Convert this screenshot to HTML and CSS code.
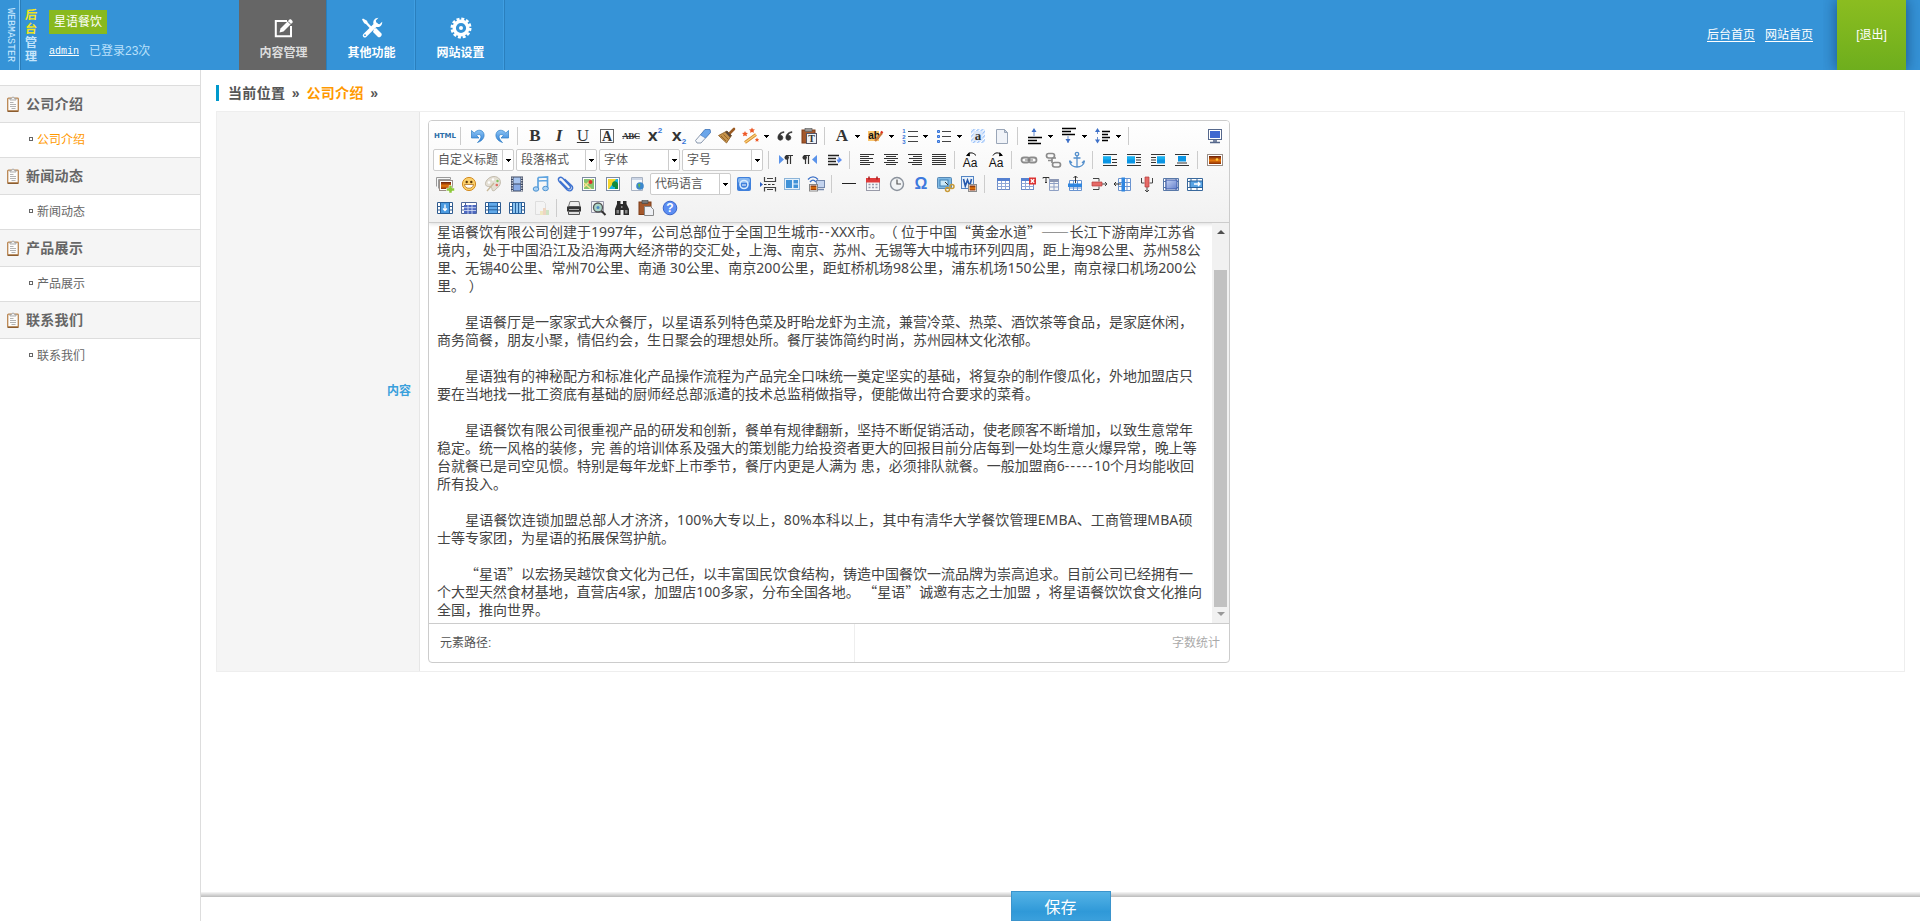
FILE: index.html
```html
<!DOCTYPE html>
<html lang="zh-CN">
<head>
<meta charset="utf-8">
<title>后台管理</title>
<link rel="stylesheet" href="styles.css">
</head>
<body>
<svg class="defs" width="0" height="0">
  <defs>
    <linearGradient id="g-blue" x1="0" y1="0" x2="0" y2="1"><stop offset="0" stop-color="#8cc4f5"/><stop offset="1" stop-color="#2f7fd6"/></linearGradient>
    <linearGradient id="g-sun" x1="0" y1="0" x2="0" y2="1"><stop offset="0" stop-color="#6a1d08"/><stop offset=".55" stop-color="#e8790c"/><stop offset="1" stop-color="#8a2d05"/></linearGradient>
    <linearGradient id="g-cell" x1="0" y1="0" x2="1" y2="1"><stop offset="0" stop-color="#c3d1f3"/><stop offset="1" stop-color="#6480cc"/></linearGradient>
    <pattern id="p-stripe" width="3" height="3" patternUnits="userSpaceOnUse" patternTransform="rotate(45)"><rect width="3" height="3" fill="#fff"/><rect width="1.4" height="3" fill="#9cc3fa"/></pattern>
  </defs>
  <symbol id="undo" viewBox="0 0 20 20"><path d="M3.500 4.500v7.500H11L8.600 9.600C10.500 7.600 13.500 8.500 12.800 11.500 12.400 13.500 11 15 9.500 16.500c5-1.500 7.500-5.500 6.300-9C14.500 3.500 9.500 3 6.200 7z" fill="url(#g-blue)" stroke="#2c7cc4" stroke-width=".7"/></symbol>
  <symbol id="redo" viewBox="0 0 20 20"><path d="M16.500 4.500v7.500H9l2.400-2.400C9.500 7.600 6.500 8.500 7.200 11.500 7.600 13.500 9 15 10.500 16.500c-5-1.500-7.500-5.500-6.300-9C5.500 3.500 10.500 3 13.800 7z" fill="url(#g-blue)" stroke="#2c7cc4" stroke-width=".7"/></symbol>
  <symbol id="eraser" viewBox="0 0 20 20"><path d="M2.500 14.500 12 3.500h5l.5 3-9.500 10.500H4z" fill="#f4f7fb" stroke="#8a98ad"/><path d="m7.500 9 4.500-5.500h5l.5 3-5 5.500z" fill="#6ba6ea" stroke="#3c76c0" stroke-width=".6"/></symbol>
  <symbol id="broom" viewBox="0 0 20 20"><path d="m17 3-4 4" stroke="#9a5a22" stroke-width="2.600" stroke-linecap="round"/><path d="m10 5 4.500 4.500L9.500 17 1.500 9.500z" fill="#c5924a" stroke="#8c5a20" stroke-width=".8"/><path d="m10 5 4.500 4.500-1.500 2L8 6z" fill="#5a4636"/><path d="m4 10 5 5M6.500 8.500l5 5" stroke="#805018" stroke-width=".7"/></symbol>
  <symbol id="wand" viewBox="0 0 20 20"><path d="m4 16.500 11-8" stroke="#d88a2c" stroke-width="3"/><path d="m4 16.500 11-8" stroke="#f9d27a" stroke-width="1.200"/><path d="m4 5 .9 1.800L7 7l-1.500 1.300.5 2L4 9.400l-2 .9.500-2L1 7l2.100-.2zM11 1.500l.9 1.800 2.100.2-1.500 1.300.5 2-2-.9-2 .9.500-2L8 3.500l2.100-.2zM16 11.500l.7 1.400 1.500.2-1.100 1 .3 1.600-1.400-.8-1.400.8.300-1.600-1.100-1 1.500-.2z" fill="#ee5a28"/></symbol>
  <symbol id="quote" viewBox="0 0 20 20"><path d="M9 6.500C6 7 5.500 8 5.500 9.200A2.500 2.500 0 1 1 3 12.500C2.500 9 5 6 9 5.700zM17 6.500c-3 .5-3.500 1.500-3.500 2.700a2.500 2.500 0 1 1-2.500 3.300C10.500 9 13 6 17 5.700z" fill="#333" stroke="#333" stroke-width=".7"/></symbol>
  <symbol id="page" viewBox="0 0 20 20"><path d="M4.500 3.500h8l3 3v11h-11z" fill="#f0f3f8" stroke="#9aa6b8"/><path d="M12.500 3.500v3h3z" fill="#c2cddd" stroke="#9aa6b8"/></symbol>
  <symbol id="ul" viewBox="0 0 20 20"><path d="M8 5.500h9M8 10.500h9M8 15.500h9" stroke="#444"/><path d="M3.500 4.500h2v2h-2zM3.500 9.500h2v2h-2zM3.500 14.500h2v2h-2z" fill="#8cb4f4" stroke="#3473d8"/></symbol>
  <symbol id="sptop" viewBox="0 0 20 20"><path d="M3 11.500h14M3 14.500h9M3 17.500h13" stroke="#000" stroke-width="1.300"/><path d="M9 3v7" stroke="#6b8fd0"/><path d="m6.500 6 2.500-4 2.500 4z" fill="#3d70c8"/></symbol>
  <symbol id="spbot" viewBox="0 0 20 20"><path d="M3 2.500h14M3 5.500h9M3 8.500h13" stroke="#000" stroke-width="1.300"/><path d="M9 10v7" stroke="#6b8fd0"/><path d="m6.500 13 2.500 4 2.500-4z" fill="#3d70c8"/></symbol>
  <symbol id="lineh" viewBox="0 0 20 20"><path d="M9 5.500h8M9 8.500h6M9 11.500h8M9 14.500h6" stroke="#000" stroke-width="1.300"/><path d="M4.500 4v4M4.500 11v5" stroke="#6b8fd0"/><path d="m2 6 2.500-4L7 6zM2 13.500l2.500 4 2.500-4z" fill="#3d70c8"/></symbol>
  <symbol id="screen" viewBox="0 0 20 20"><rect x="3.500" y="3.500" width="13" height="10" fill="#fff" stroke="#56688c"/><rect x="5" y="5" width="10" height="7" fill="#3f68d0"/><path d="M8 14h4v2H8z" fill="#7b88a4"/><path d="M5 16.500h10" stroke="#56688c" stroke-width="1.500"/></symbol>
  <symbol id="ltr" viewBox="0 0 20 20"><path d="M3 5v9l5-4.500z" fill="#5a93ea"/><path d="M11.500 5.500V14M14.500 5.500V14M10 5.500h7" stroke="#333" stroke-width="1.200"/><circle cx="10.700" cy="7.500" r="2.200" fill="#333"/></symbol>
  <symbol id="rtl" viewBox="0 0 20 20"><path d="M17 5v9l-5-4.500z" fill="#5a93ea"/><path d="M5.500 5.500V14M8.500 5.500V14M4 5.500h6" stroke="#333" stroke-width="1.200"/><circle cx="4.700" cy="7.500" r="2.200" fill="#333"/></symbol>
  <symbol id="indent" viewBox="0 0 20 20"><path d="M4 5.500h11M4 8.500h8M4 11.500h8M4 14.500h10" stroke="#222" stroke-width="1.500"/><path d="M12.500 9.500h2v-3l3.500 3.500-3.500 3z" fill="#5a8cf0"/></symbol>
  <symbol id="al" viewBox="0 0 20 20"><path d="M3 4.500h14M3 6.500h9M3 8.500h13M3 10.500h9M3 12.500h14M3 14.500h10" stroke="#333"/></symbol>
  <symbol id="ac" viewBox="0 0 20 20"><path d="M3 4.500h14M5 6.500h10M3 8.500h14M6 10.500h8M3 12.500h14M5 14.500h10" stroke="#333"/></symbol>
  <symbol id="ar" viewBox="0 0 20 20"><path d="M3 4.500h14M8 6.500h9M4 8.500h13M8 10.500h9M3 12.500h14M7 14.500h10" stroke="#333"/></symbol>
  <symbol id="aj" viewBox="0 0 20 20"><path d="M3 4.500h14M3 6.500h14M3 8.500h14M3 10.500h14M3 12.500h14M3 14.500h14" stroke="#333"/></symbol>
  <symbol id="link" viewBox="0 0 20 20"><g fill="none" stroke="#8b8b8b" stroke-width="1.800"><rect x="2.500" y="7.500" width="8" height="5" rx="2.500"/><rect x="9.500" y="7.500" width="8" height="5" rx="2.500"/></g><path d="M6 10h8" stroke="#777" stroke-width="1.200"/></symbol>
  <symbol id="unlink" viewBox="0 0 20 20"><g fill="none" stroke="#8b8b8b" stroke-width="1.700"><rect x="3.500" y="3.500" width="8" height="4.500" rx="2.200"/><rect x="9.500" y="12.500" width="8" height="4.500" rx="2.200"/><path d="M9 8v5M13 8H9.500M5 10.500h3.500"/></g></symbol>
  <symbol id="anchor" viewBox="0 0 20 20"><g fill="none" stroke="#5590cc" stroke-width="1.300"><circle cx="10" cy="4" r="1.700"/><path d="M10 6v11M6.500 8h7M2.500 11c.5 4 4 6 7.500 6s7-2 7.500-6M2.500 10.500 5 13M17.500 10.500 15 13"/></g></symbol>
  <symbol id="imgnone" viewBox="0 0 20 20"><path d="M3 4.500h14M3 15.500h14M12 9.500h5M12 12.500h5" stroke="#333"/><rect x="3" y="6.500" width="8" height="7" fill="#0b95e4"/><path d="M3 6.500h8v3H3z" fill="#17b0ef"/></symbol>
  <symbol id="imgleft" viewBox="0 0 20 20"><path d="M3 4.500h14M3 15.500h14M12 7.500h5M12 10h5M12 12.500h5" stroke="#333"/><rect x="3" y="6.500" width="8" height="7" fill="#0b95e4"/><path d="M3 6.500h8v3H3z" fill="#17b0ef"/></symbol>
  <symbol id="imgright" viewBox="0 0 20 20"><path d="M3 4.500h14M3 15.500h14M3 7.500h5M3 10h5M3 12.500h5" stroke="#333"/><rect x="9" y="6.500" width="8" height="7" fill="#0b95e4"/><path d="M9 6.500h8v3H9z" fill="#17b0ef"/></symbol>
  <symbol id="imgcenter" viewBox="0 0 20 20"><path d="M3 4.500h14M3 15.500h14M5 13h10" stroke="#333"/><rect x="6" y="6" width="8" height="5.500" fill="#0b95e4"/></symbol>
  <symbol id="image" viewBox="0 0 20 20"><rect x="2.500" y="4.500" width="15" height="11" fill="#fff" stroke="#9a8f88"/><rect x="4" y="6" width="12" height="8" fill="url(#g-sun)"/><circle cx="12" cy="9.500" r="1.300" fill="#ffc93a"/></symbol>
  <symbol id="images" viewBox="0 0 20 20"><path d="M1.500 12.500v-9h14v2M3.500 14.500v-9h12" fill="none" stroke="#9a9a9a"/><rect x="4.500" y="6.500" width="13" height="10" fill="#fff" stroke="#9a8f88"/><rect x="6" y="8" width="10" height="7" fill="url(#g-sun)"/><path d="M14 11.500h3v2.500h2.500v3H17v2h-3v-2h-2.500v-3H14z" fill="#8dc83a" stroke="#fff" stroke-width=".5"/></symbol>
  <symbol id="smile" viewBox="0 0 20 20"><circle cx="10" cy="10" r="6.600" fill="#fcd06a" stroke="#d28b22"/><circle cx="7.700" cy="8" r="1.200" fill="#5d3a08"/><circle cx="12.300" cy="8" r="1.200" fill="#5d3a08"/><path d="M5.500 10.500h9c-.5 5-8.500 5-9 0z" fill="#fff" stroke="#a86410" stroke-width=".7"/></symbol>
  <symbol id="palette" viewBox="0 0 20 20"><path d="M11 2.500c5 0 7.500 4 6 8-1 3-3 3-4 4.500-1 2-4 2.500-4 .5 0-2-1-3-3.500-3C2 12.500 1.500 9 4 6c1.500-2 4-3.500 7-3.500z" fill="#e4dfd4" stroke="#b8b0a0" stroke-width=".8"/><circle cx="6" cy="8.500" r="1.300" fill="#fff"/><circle cx="10" cy="5.500" r="1.200" fill="#fff"/><circle cx="14.500" cy="7" r="1.200" fill="#7ec458"/><circle cx="13.800" cy="11" r="1.300" fill="#e06a60"/><path d="m4 17 7-8" stroke="#c8b898" stroke-width="1.400"/></symbol>
  <symbol id="film" viewBox="0 0 20 20"><rect x="4" y="2.500" width="12" height="15" fill="#3b4660"/><rect x="6.500" y="3.500" width="7" height="6" fill="#a8c4ee"/><rect x="6.500" y="10.500" width="7" height="6" fill="#88aae4"/><path d="M5.200 3.500v14M14.800 3.500v14" stroke="#fff" stroke-width="1.200" stroke-dasharray="1.200 1.300"/></symbol>
  <symbol id="music" viewBox="0 0 20 20"><path d="M7 3.500 16.500 3v11.500M7 3.500V15M7 7l9.500-.5" fill="none" stroke="#5fa4e0" stroke-width="1.700"/><ellipse cx="5" cy="15" rx="2.800" ry="2.200" fill="#a8d2f5" stroke="#4d92d0"/><ellipse cx="14.500" cy="14.500" rx="2.800" ry="2.200" fill="#a8d2f5" stroke="#4d92d0"/></symbol>
  <symbol id="clip" viewBox="0 0 20 20"><path d="m5 7 7.500 7.500c2 1.500 4-.5 2.500-2.500L7.500 4C5 2 2 4.500 4.200 7.500l8 8.500c4 2.500 7-1.500 4.300-4.500L9.500 5" fill="none" stroke="#3f73d0" stroke-width="1.400"/></symbol>
  <symbol id="map" viewBox="0 0 20 20"><rect x="3.500" y="3.500" width="13" height="13" fill="#fff" stroke="#7c8aa0"/><rect x="5" y="5" width="10" height="10" fill="#86c46c"/><path d="m5 13 8-8M5 9l7 6" stroke="#f6e08a" stroke-width="1.500"/><circle cx="11.500" cy="8" r="2" fill="#d9302a"/></symbol>
  <symbol id="gmap" viewBox="0 0 20 20"><rect x="3.500" y="3.500" width="13" height="13" fill="#fff" stroke="#7c8aa0"/><rect x="5" y="5" width="10" height="10" fill="#18b4e0"/><path d="M5 5h8L6 15H5z" fill="#f6d62c"/><path d="M14 8c-3-2-5 0-5 2.500S12 14 14 12v-2h-2v5h3v-5z" fill="#108a3c"/></symbol>
  <symbol id="frame" viewBox="0 0 20 20"><path d="M4.500 3.500h11v13h-11z" fill="#f6f8fb" stroke="#a8b2c2"/><path d="M5 4h10v2H5z" fill="#ccd6e6"/><circle cx="13" cy="12" r="3.800" fill="#3b87cc"/><path d="M11 10c2-1 3 1 2 2s0 2-1 2z" fill="#64b84c"/></symbol>
  <symbol id="app" viewBox="0 0 20 20"><rect x="3" y="3" width="14" height="14" rx="2" fill="#3f80dc"/><rect x="4" y="4" width="12" height="5" rx="2" fill="#87b7f0"/><circle cx="10" cy="10.500" r="4" fill="none" stroke="#d9edff" stroke-width="1.600"/><path d="M8 11h4" stroke="#fff"/></symbol>
  <symbol id="pagebreak" viewBox="0 0 20 20"><path d="M6.500 3v4.500h11V3M6.500 17.500v-4h11v4M9 4.500h6M9 15.500h6" fill="none" stroke="#444" stroke-width="1.200"/><path d="M6 10.500h12" stroke="#333" stroke-dasharray="2.500 1.500"/><path d="m2 8 3 2.500L2 13z" fill="#2d60c4"/></symbol>
  <symbol id="template" viewBox="0 0 20 20"><rect x="2.500" y="4.500" width="15" height="11" fill="#e4f1fc" stroke="#8cb4d8"/><path d="M4 6h6v8H4zM11.500 6h4.500v3.500h-4.500zM11.500 10.500h4.500V14h-4.500z" fill="#3f92d8"/></symbol>
  <symbol id="remote" viewBox="0 0 20 20"><path d="M2 5.500C5 2 9 2 12 5.500M4 8c2-2.500 4-2.500 6 0" fill="none" stroke="#3e72c8" stroke-width="1.300"/><rect x="10.500" y="6.500" width="8" height="7" fill="#c4d4ee" stroke="#7488ac"/><path d="M12 15.500h6" stroke="#7488ac" stroke-width="1.500"/><rect x="3.500" y="10.500" width="8" height="6.500" fill="#fff" stroke="#888"/><rect x="4.500" y="11.500" width="6" height="4.500" fill="url(#g-sun)"/></symbol>
  <symbol id="hr" viewBox="0 0 20 20"><path d="M3 9.500h14" stroke="#222" stroke-width="1.200"/></symbol>
  <symbol id="cal" viewBox="0 0 20 20"><rect x="3.500" y="4.500" width="13" height="12" fill="#f6f6f8" stroke="#989aa8"/><path d="M3 4h14v4.500H3z" fill="#e03a3a"/><path d="M6 2.500v3M14 2.500v3" stroke="#a31f1f" stroke-width="1.500"/><path d="M5.500 10.500h9M5.500 13.500h9" stroke="#969cac" stroke-width="1.500" stroke-dasharray="2 1.500"/></symbol>
  <symbol id="clock" viewBox="0 0 20 20"><circle cx="10" cy="10" r="6.500" fill="#f2f4f6" stroke="#8b929c" stroke-width="1.400"/><path d="M10 5.500V10h4" fill="none" stroke="#555" stroke-width="1.200"/></symbol>
  <symbol id="snap" viewBox="0 0 20 20"><rect x="2.500" y="3.500" width="14" height="11" rx="1" fill="#7fb9e4" stroke="#5888b4"/><rect x="5" y="6" width="8" height="6" fill="#c9e8f8" stroke="#3f80b4"/><path d="m10 8 3 3" stroke="#333"/><circle cx="12.500" cy="15.500" r="2" fill="none" stroke="#c89a38" stroke-width="1.500"/><circle cx="17" cy="12.500" r="2" fill="none" stroke="#c89a38" stroke-width="1.500"/></symbol>
  <symbol id="word" viewBox="0 0 20 20"><rect x="2.500" y="2.500" width="12" height="12" fill="#e8f1fb" stroke="#5485c4"/><path d="m4.500 5 1.800 7L8.500 6l2.200 6 1.800-7" fill="none" stroke="#2458ac" stroke-width="1.600"/><rect x="9.500" y="10.500" width="8" height="7" fill="#fff" stroke="#8c8c8c"/><rect x="10.500" y="11.500" width="6" height="5" fill="url(#g-sun)"/></symbol>
  <symbol id="table" viewBox="0 0 20 20"><rect x="4.500" y="4.500" width="12" height="11" fill="#fff" stroke="#6c8cc8"/><path d="M4 4h13v3H4z" fill="#5580d0"/><path d="M4.500 9.500h12M4.500 12.500h12M8.500 7v8.500M12.500 7v8.500" stroke="#8fa8d8"/></symbol>
  <symbol id="deltable" viewBox="0 0 20 20"><rect x="4.500" y="4.500" width="12" height="11" fill="#fff" stroke="#6c8cc8"/><path d="M4 4h13v3H4z" fill="#5580d0"/><path d="M4.500 9.500h12M4.500 12.500h12M8.500 7v8.500M12.500 7v8.500" stroke="#8fa8d8"/><rect x="12" y="3.500" width="7" height="7" fill="#dc3030"/><path d="m13.800 5.300 3.400 3.400m0-3.400-3.400 3.400" stroke="#fff" stroke-width="1.400"/></symbol>
  <symbol id="ptable" viewBox="0 0 20 20"><path d="M2 4.500V3.500h6v1M5 3.500v5M4 8.500h2" fill="none" stroke="#333"/><path d="M8 5h10v3H8z" fill="#8d98b4"/><path d="M8.500 5.500v11h9v-11M8.500 9.500h9M8.500 13h9M13 8v8.500" fill="none" stroke="#8fa0c4"/></symbol>
  <symbol id="insrow" viewBox="0 0 20 20"><path d="M4.500 6.500h12v10h-12zM4.500 14h12M8.500 6.500v10M12.500 6.500v10" fill="#fff" stroke="#6a94d0"/><path d="M3 9.500h14v3.500H3z" fill="#2f86e0"/><path d="M10.500 2v7M8.500 4l2-2 2 2" fill="none" stroke="#333"/></symbol>
  <symbol id="delrow" viewBox="0 0 20 20"><path d="M4 4.500h6v3M4 15.500h6v-3M12 10h6m-2-2 2 2-2 2" fill="none" stroke="#444"/><path d="M3 8h10v4H3z" fill="#e56b68" stroke="#b83e3e" stroke-width=".7"/></symbol>
  <symbol id="inscol" viewBox="0 0 20 20"><path d="M5.500 4.500h12v12h-12zM5.500 8.500h12M5.500 12.500h12M14 4.500v12" fill="#fff" stroke="#6a94d0"/><path d="M8.500 3.500H12v14H8.500z" fill="#2f86e0"/><path d="M1 10h7M3 8l-2 2 2 2" fill="none" stroke="#333"/></symbol>
  <symbol id="delcol" viewBox="0 0 20 20"><path d="M4.500 4v5h3M15.500 4v5h-3M10 12v6m-2-2 2 2 2-2" fill="none" stroke="#444"/><path d="M8 3h4v10H8z" fill="#e56b68" stroke="#b83e3e" stroke-width=".7"/></symbol>
  <symbol id="merge" viewBox="0 0 20 20"><path d="M2.500 4.500h15v12h-15zM5 4v12M15 4v12M2.500 7.500h15M2.500 13.500h15" fill="#fff" stroke="#5878a8"/><rect x="5" y="6" width="11" height="9" fill="url(#g-cell)" stroke="#3c5aa8"/></symbol>
  <symbol id="mergeright" viewBox="0 0 20 20"><path d="M2.500 4.500h15v12h-15zM6 4v12M12 4v12M2.500 7.500h15M2.500 13.500h15" fill="#fff" stroke="#38689c"/><rect x="5" y="7" width="12.500" height="6.500" fill="#5aa4e4" stroke="#26609c"/><path d="M9 10h6m-2-2 2 2-2 2" fill="none" stroke="#fff" stroke-width="1.300"/></symbol>
  <symbol id="mergedown" viewBox="0 0 20 20"><path d="M2.500 4.500h15v11h-15zM2.500 8.500h15M2.500 12h15" fill="#fff" stroke="#305c90"/><rect x="5.500" y="4.500" width="9" height="11" fill="#4a9ae0" stroke="#26609c"/><path d="M10 6.500v6m-2-2 2 2 2-2" fill="none" stroke="#fff" stroke-width="1.300"/></symbol>
  <symbol id="splitcell" viewBox="0 0 20 20"><path d="M2.500 4.500h15v11h-15zM2.500 8.500h15M2.500 12h15M6.500 4.500v11" fill="#fff" stroke="#506898"/><rect x="5" y="7" width="12" height="8.500" fill="#4d68c0"/><path d="M5 9.700h12M5 12.500h12M9 7v9M13 7v9" stroke="#dbe3f8" stroke-width=".8"/></symbol>
  <symbol id="splitrow" viewBox="0 0 20 20"><path d="M2.500 4.500h15v11h-15zM2.500 8.500h15M2.500 12h15" fill="#fff" stroke="#305c90"/><path d="M5.500 4.500h9v11h-9z" fill="#62aaea" stroke="#26609c"/><path d="M5.500 8.300h9M5.500 11.800h9" stroke="#26609c"/></symbol>
  <symbol id="splitcol" viewBox="0 0 20 20"><path d="M2.500 4.500h15v11h-15zM2.500 8.500h15M2.500 12h15" fill="#fff" stroke="#305c90"/><path d="M5.500 4.500h9v11h-9z" fill="#8cc4f0" stroke="#26609c"/><path d="M8.500 4.500v11M11.500 4.500v11" stroke="#26609c"/></symbol>
  <symbol id="chart" viewBox="0 0 20 20" opacity=".35"><path d="M4.500 3.500h8l2 2v11h-10z" fill="#f6f6f6" stroke="#b8b8b8"/><path d="M9 13h3v4H9z" fill="#ecd66a"/><path d="M12 10h3v7h-3z" fill="#e6a06a"/><path d="M15 12h3v5h-3z" fill="#8cc870"/></symbol>
  <symbol id="print" viewBox="0 0 20 20"><path d="M6 3.500h9l1 5H4.500z" fill="#eee" stroke="#777"/><path d="M3 8.500h14v5H3z" fill="#333"/><path d="M5 11h10v1H5z" fill="#aaa"/><path d="M4.500 13.500h11v3h-11z" fill="#ddd" stroke="#555"/></symbol>
  <symbol id="preview" viewBox="0 0 20 20"><path d="M3.500 3.500h12v11h-12z" fill="#f2f4f6" stroke="#99a"/><circle cx="10" cy="9.500" r="4.500" fill="#aad4c8" stroke="#555" stroke-width="1.300"/><circle cx="10" cy="9.500" r="1.500" fill="#4c8ac4"/><path d="m13.500 13 4 4" stroke="#333" stroke-width="2"/></symbol>
  <symbol id="find" viewBox="0 0 20 20"><path d="M5 3h3.500v3H11V3h3.500v3L17 11v6h-5.500v-5h-3v5H3v-6l2-5z" fill="#2c2c2c"/><path d="M4.500 12h2.500v3.500H4.500zM13 12h2.500v3.500H13zM9 8h1.500v2H9z" fill="#888"/></symbol>
  <symbol id="paste" viewBox="0 0 20 20"><rect x="3" y="4" width="12" height="12.500" fill="#a4582c" stroke="#7c3c18"/><rect x="6" y="2.500" width="6" height="3" fill="#777" stroke="#444" stroke-width=".6"/><path d="M8.500 8.500h6l3 3v6h-9z" fill="#eef0f4" stroke="#888"/></symbol>
  <symbol id="clipboard" viewBox="0 0 12 16"><rect x=".7" y="2.200" width="10.600" height="12.800" rx=".8" fill="#fdfdfc" stroke="#b98550" stroke-width="1.300"/><path d="M.5 15.300h11" stroke="#7c4c1c"/><path d="M3 4V2.500h1.500C4.700.6 7.300.6 7.500 2.500H9V4z" fill="#f4f4f4" stroke="#999" stroke-width=".8"/><path d="M3 6.500h3.500M3 8.500h6M3 10.500h6M4.500 12.500h4" stroke="#aaa" stroke-width=".9"/></symbol>
</svg>

<header class="top">
  <div class="top-vert">WEBMASTER</div>
  <div class="top-name"><b>后</b><b>台</b><i>管</i><i>理</i></div>
  <div class="top-user">
    <span class="badge">星语餐饮</span>
    <div class="login"><a>admin</a><span>已登录23次</span></div>
  </div>
  <nav class="nav">
    <a class="on"><svg width="22" height="22" viewBox="0 0 22 22"><path d="M14 4H2.800v15.200H18V9" fill="none" stroke="#fff" stroke-width="2"/><path d="m6.500 15.500 1-4L16.500 2.500c1-1 4 1.500 3 3l-9 9z" fill="#fff"/><path d="m15 4.500 3 3" stroke="#666"/></svg>内容管理</a>
    <a><svg width="22" height="22" viewBox="0 0 22 22"><path d="m2 1.500 4 2.200.8 2 4.700 5-1.700 1.600-4.700-5-1.900-1L1 2.500z" fill="#fff"/><path d="m13 12 2-1 5.500 5.500c1 2-1.500 4.500-3.500 3.500L12 15z" fill="#fff"/><path d="M3.800 18.500 15 7.500" stroke="#fff" stroke-width="4" stroke-linecap="round"/><path d="M17.500.8c-3.500 0-6 3-5 6.200l3 3c3.500.7 6-2 5.700-5.200L18.500 7.300l-3-.8-.7-3z" fill="#fff"/><circle cx="4" cy="18.200" r=".9" fill="#3593d7"/></svg>其他功能</a>
    <a><svg width="22" height="22" viewBox="0 0 22 22"><circle cx="11" cy="11" r="9.200" fill="none" stroke="#fff" stroke-width="2.600" stroke-dasharray="3 1.817"/><circle cx="11" cy="11" r="6.800" fill="none" stroke="#fff" stroke-width="3.400"/><circle cx="11" cy="11" r="2" fill="#fff"/></svg>网站设置</a>
  </nav>
  <div class="top-links"><a>后台首页</a><a>网站首页</a></div>
  <a class="logout">[退出]</a>
</header>

<div class="body">
  <aside class="side">
    <h3><svg><use href="#clipboard"/></svg>公司介绍</h3><a class="cur">公司介绍</a>
    <h3><svg><use href="#clipboard"/></svg>新闻动态</h3><a>新闻动态</a>
    <h3><svg><use href="#clipboard"/></svg>产品展示</h3><a>产品展示</a>
    <h3><svg><use href="#clipboard"/></svg>联系我们</h3><a>联系我们</a>
  </aside>

  <main class="main">
    <div class="crumb"><span>当前位置</span><span class="raq">»</span><a>公司介绍</a><span class="raq">»</span></div>
    <div class="form">
      <div class="label">内容</div>
      <div class="field">
        <div class="editor">
          <div class="toolbar">
            <div class="row">
              <span class="b t-html">HTML</span><i class="sep"></i>
              <svg class="b"><use href="#undo"/></svg><svg class="b"><use href="#redo"/></svg><i class="sep"></i>
              <span class="b serif"><b>B</b></span><span class="b serif"><em>I</em></span><span class="b serif"><u>U</u></span>
              <svg class="b" viewBox="0 0 20 20"><rect x="3.500" y="3.500" width="13" height="13" fill="none" stroke="#666"/><text x="10" y="15" class="sg" font-size="14">A</text></svg><span class="b t-abc">ABC</span>
              <span class="b t-x">X<sup>2</sup></span><span class="b t-x">X<sub>2</sub></span>
              <svg class="b"><use href="#eraser"/></svg><svg class="b"><use href="#broom"/></svg>
              <svg class="b"><use href="#wand"/></svg><i class="dd"></i>
              <svg class="b"><use href="#quote"/></svg>
              <svg class="b" viewBox="0 0 20 20"><rect x="3" y="4" width="13" height="13" fill="#a4582c" stroke="#7c3c18"/><rect x="6" y="2.500" width="7" height="3" fill="#999" stroke="#555" stroke-width=".6"/><rect x="7.500" y="7.500" width="10" height="10" fill="#eef2f6" stroke="#556"/><text x="12.500" y="16" class="sg" font-size="10">T</text></svg><i class="sep"></i>
              <svg class="b" viewBox="0 0 20 20"><text x="10" y="15" class="sg" font-size="17">A</text></svg><i class="dd"></i>
              <svg class="b" viewBox="0 0 20 20"><rect x="2" y="5" width="11" height="10" fill="#f9c56c"/><text x="8" y="13" class="ss" font-size="10" font-weight="bold">ab</text><path d="m9 15 7-8" stroke="#c87838" stroke-width="2.400"/><path d="m15 7 1.500-1.500" stroke="#df3020" stroke-width="2.400"/></svg><i class="dd"></i>
              <svg class="b" viewBox="0 0 20 20"><path d="M8 5.500h10M8 10.500h10M8 15.500h10" stroke="#444"/><text x="4" y="7" class="ss num">1</text><text x="4" y="12.500" class="ss num">2</text><text x="4" y="18" class="ss num">3</text></svg><i class="dd"></i>
              <svg class="b"><use href="#ul"/></svg><i class="dd"></i>
              <svg class="b" viewBox="0 0 20 20"><rect x="3" y="3" width="14" height="14" fill="url(#p-stripe)"/><rect x="5.500" y="5" width="9" height="10" fill="#dbe8fb"/><text x="10" y="14" class="sg" font-size="13">a</text></svg><svg class="b"><use href="#page"/></svg><i class="sep"></i>
              <svg class="b"><use href="#sptop"/></svg><i class="dd"></i>
              <svg class="b"><use href="#spbot"/></svg><i class="dd"></i>
              <svg class="b"><use href="#lineh"/></svg><i class="dd"></i><i class="sep"></i>
              <svg class="b last"><use href="#screen"/></svg>
            </div>
            <div class="row">
              <span class="combo">自定义标题</span><span class="combo">段落格式</span><span class="combo">字体</span><span class="combo">字号</span><i class="sep"></i>
              <svg class="b"><use href="#ltr"/></svg><svg class="b"><use href="#rtl"/></svg><svg class="b"><use href="#indent"/></svg><i class="sep"></i>
              <svg class="b"><use href="#al"/></svg><svg class="b"><use href="#ac"/></svg><svg class="b"><use href="#ar"/></svg><svg class="b"><use href="#aj"/></svg><i class="sep"></i>
              <svg class="b" viewBox="0 0 20 20"><text x="8" y="16.500" class="ss" font-size="12">Aa</text><path d="M5 5.500C7 2 11 2 14 5.500" fill="none" stroke="#000"/><path d="M7.500 2 4 5.800l4 .5z"/></svg>
              <svg class="b" viewBox="0 0 20 20"><text x="10" y="16.500" class="ss" font-size="12">Aa</text><path d="M7 5.500c2-3.500 6-3.500 9 0" fill="none" stroke="#000"/><path d="m13.500 2 3.500 3.800-4 .5z"/></svg><i class="sep"></i>
              <svg class="b"><use href="#link"/></svg><svg class="b"><use href="#unlink"/></svg><svg class="b"><use href="#anchor"/></svg><i class="sep"></i>
              <svg class="b"><use href="#imgnone"/></svg><svg class="b"><use href="#imgleft"/></svg><svg class="b"><use href="#imgright"/></svg><svg class="b"><use href="#imgcenter"/></svg><i class="sep"></i>
              <svg class="b"><use href="#image"/></svg>
            </div>
            <div class="row">
              <svg class="b"><use href="#images"/></svg><svg class="b"><use href="#smile"/></svg><svg class="b"><use href="#palette"/></svg><svg class="b"><use href="#film"/></svg><svg class="b"><use href="#music"/></svg><svg class="b"><use href="#clip"/></svg><svg class="b"><use href="#map"/></svg><svg class="b"><use href="#gmap"/></svg><svg class="b"><use href="#frame"/></svg>
              <span class="combo code">代码语言</span>
              <svg class="b"><use href="#app"/></svg><svg class="b"><use href="#pagebreak"/></svg><svg class="b"><use href="#template"/></svg><svg class="b"><use href="#remote"/></svg><i class="sep"></i>
              <svg class="b"><use href="#hr"/></svg><svg class="b"><use href="#cal"/></svg><svg class="b"><use href="#clock"/></svg><span class="b omega">Ω</span><svg class="b"><use href="#snap"/></svg><svg class="b"><use href="#word"/></svg><i class="sep wide"></i>
              <svg class="b"><use href="#table"/></svg><svg class="b"><use href="#deltable"/></svg><svg class="b"><use href="#ptable"/></svg><svg class="b"><use href="#insrow"/></svg><svg class="b"><use href="#delrow"/></svg><svg class="b"><use href="#inscol"/></svg><svg class="b"><use href="#delcol"/></svg><svg class="b"><use href="#merge"/></svg><svg class="b"><use href="#mergeright"/></svg>
            </div>
            <div class="row">
              <svg class="b"><use href="#mergedown"/></svg><svg class="b"><use href="#splitcell"/></svg><svg class="b"><use href="#splitrow"/></svg><svg class="b"><use href="#splitcol"/></svg><svg class="b"><use href="#chart"/></svg><i class="sep"></i>
              <svg class="b"><use href="#print"/></svg><svg class="b"><use href="#preview"/></svg><svg class="b"><use href="#find"/></svg><svg class="b"><use href="#paste"/></svg>
              <svg class="b" viewBox="0 0 20 20"><circle cx="10" cy="10" r="6.800" fill="#5c8df2" stroke="#3a66cc"/><text x="10" y="14.300" class="ss help" font-size="12">?</text></svg>
            </div>
          </div>
          <div class="content">
            <div class="text">
              <p>星语餐饮有限公司创建于1997年，公司总部位于全国卫生城市<span class="hy">--</span>XXX市。（ 位于中国<q>“</q>黄金水道<q>”</q><q class="dash">——</q>长江下游南岸江苏省<br>境内， 处于中国沿江及沿海两大经济带的交汇处，上海、南京、苏州、无锡等大中城市环列四周，距上海98公里、苏州58公<br><span class="digits">里、无锡40公里、常州70公里、南通 30公里、南京200公里，距虹桥机场98公里，浦东机场150公里，南京禄口机场200公</span><br>里。 ）</p>
              <p>　　星语餐厅是一家家式大众餐厅，以星语系列特色菜及盱眙龙虾为主流，兼营冷菜、热菜、酒饮茶等食品，是家庭休闲，<br>商务简餐，朋友小聚，情侣约会，生日聚会的理想处所。餐厅装饰简约时尚，苏州园林文化浓郁。</p>
              <p>　　星语独有的神秘配方和标准化产品操作流程为产品完全口味统一奠定坚实的基础，将复杂的制作傻瓜化，外地加盟店只<br>要在当地找一批工资底有基础的厨师经总部派遣的技术总监稍做指导，便能做出符合要求的菜肴。</p>
              <p>　　星语餐饮有限公司很重视产品的研发和创新，餐单有规律翻新，坚持不断促销活动，使老顾客不断增加，以致生意常年<br>稳定。统一风格的装修，完 善的培训体系及强大的策划能力给投资者更大的回报目前分店每到一处均生意火爆异常，晚上等<br>台就餐已是司空见惯。特别是每年龙虾上市季节，餐厅内更是人满为 患，必须排队就餐。一般加盟商6<span class="hy">-----</span>10个月均能收回<br>所有投入。</p>
              <p><span class="latin">　　星语餐饮连锁加盟总部人才济济，100%大专以上，80%本科以上，其中有清华大学餐饮管理EMBA、工商管理MBA硕</span><br>士等专家团，为星语的拓展保驾护航。</p>
              <p>　　<q>“</q>星语<q>”</q>以宏扬吴越饮食文化为己任，以丰富国民饮食结构，铸造中国餐饮一流品牌为崇高追求。目前公司已经拥有一<br><span class="tight">个大型天然食材基地，直营店4家，加盟店100多家，分布全国各地。 <q>“</q>星语<q>”</q>诚邀有志之士加盟 ，将星语餐饮饮食文化推向</span><br>全国，推向世界。</p>
            </div>
            <div class="scroll"><i class="up"></i><div class="thumb"></div><i class="down"></i></div>
          </div>
          <div class="status"><span class="path">元素路径:</span><span class="count">字数统计</span></div>
        </div>
      </div>
    </div>
    <div class="savebar"><button>保存</button></div>
  </main>
</div>
</body>
</html>
```

FILE: styles.css
```css
*, *::before, *::after { box-sizing: border-box; }
body { margin: 0; height: 921px; display: flex; flex-direction: column; overflow: hidden; background: #fff; color: #555; font: 12px/1.2 "Liberation Sans", "Noto Sans CJK SC", sans-serif; }
.defs { position: absolute; }
.sg { font-family: "Liberation Serif", serif; font-weight: bold; text-anchor: middle; fill: #333; }
.ss { font-family: "Liberation Sans", sans-serif; text-anchor: middle; fill: #111; }
.num { font-size: 6px; font-weight: bold; fill: #3473d8; }
.help { font-weight: bold; fill: #fff; }

.top { height: 70px; flex: none; display: flex; background: #3593d7; color: #fff; }
.top-vert { width: 20px; border-right: 1px solid #7cc6f5; padding-top: 8px; writing-mode: vertical-rl; font: 10px/18px "Liberation Mono", monospace; color: #cdeaff; box-shadow: 1px 0 #2a7db9; }
.top-name { width: 29px; padding: 8px 0 0 5px; display: flex; flex-direction: column; font-size: 12px; line-height: 14px; }
.top-name b { color: #f1e51c; font-weight: bold; transform: skewX(-4deg); width: 14px; }
.top-name i { color: #c5e5fb; font-style: normal; font-weight: bold; }
.top-user { width: 190px; padding-top: 10px; }
.badge { display: block; width: 58px; height: 24px; line-height: 25px; text-align: center; background: #88b91e; }
.login { display: flex; gap: 10px; margin-top: 9px; line-height: 17px; color: #b9e0fb; }
.login a { color: #fff; text-decoration: underline; font: 10px/17px "Liberation Mono", monospace; width: 30px; }
.nav { display: flex; }
.nav a { width: 89px; height: 70px; padding: 17px 0 0 1px; display: flex; flex-direction: column; align-items: center; gap: 5px; font-size: 12px; font-weight: bold; line-height: 18px; border-right: 1px solid #2a7fbd; box-shadow: inset -1px 0 #409fe2; }
.nav a.on { width: 88px; padding-left: 2px; background: #666; color: #ddd; box-shadow: none; }
.top-links { margin-left: auto; display: flex; gap: 10px; line-height: 70px; }
.top-links a { text-decoration: underline; text-underline-offset: 2px; }
.logout { width: 69px; margin: 0 14px 0 24px; line-height: 70px; text-align: center; background: linear-gradient(#8bbd20, #6eae1d); box-shadow: 0 0 14px rgba(0, 30, 70, .55); clip-path: inset(0 -14px 0 -14px); }

.body { flex: 1; display: flex; }
.side { width: 201px; padding-top: 15px; border-right: 1px solid #ddd; }
.side h3 { margin: 0; height: 38px; padding-left: 7px; display: flex; align-items: center; gap: 7px; background: #f5f5f5; border: solid #ddd; border-width: 1px 0; font-size: 14px; font-weight: bold; letter-spacing: .3px; color: #666; }
.side h3 svg { width: 12px; height: 16px; }
.side a { height: 34px; line-height: 34px; padding: 0 0 0 29px; display: flex; align-items: center; gap: 4px; color: #666; }
.side a::before { content: ""; width: 4px; height: 4px; border: 1px solid #666; margin-top: -2px; }
.side a.cur { color: #f90; }

.main { flex: 1; display: flex; flex-direction: column; }
.crumb { margin: 15px 0 0 15px; height: 16px; padding-left: 9px; display: flex; align-items: center; border-left: 3px solid #09c; font-size: 14px; font-weight: bold; letter-spacing: .35px; color: #555; }
.crumb a { color: #f90; }
.raq { width: 21px; text-align: center; }
.form { margin: 10px 15px 0 15px; height: 561px; display: flex; border: 1px solid #eee; }
.label { width: 203px; padding-right: 8px; background: #f5f5f5; border-right: 1px solid #e6e6e6; display: flex; align-items: center; justify-content: flex-end; color: #3aa0dc; font-weight: bold; }
.field { padding: 8px; }
.editor { width: 802px; height: 543px; border: 1px solid #ccc; border-radius: 4px; overflow: hidden; display: flex; flex-direction: column; }
.toolbar { height: 103px; padding: 3px 0 0 4px; border-bottom: 1px solid #ccc; background: linear-gradient(#fff, #f1f1f1); box-shadow: 0 1px 4px rgba(0, 0, 0, .15); }
.row { height: 24px; display: flex; align-items: center; color: #333; }
.b { width: 24px; height: 20px; flex: none; display: flex; align-items: center; justify-content: center; }
.last { margin-left: 69px; }
.sep { width: 2px; height: 18px; margin: 0 4px 0 3px; flex: none; border-left: 1px solid #ccc; }
.sep.wide { margin-right: 5px; }
.dd { width: 10px; height: 3px; flex: none; background: linear-gradient(#000, #000) 1px 0 / 5px 1px no-repeat, linear-gradient(#000, #000) 2px 1px / 3px 1px no-repeat, linear-gradient(#000, #000) 3px 2px / 1px 1px no-repeat; }
.t-html { font: bold 7px "DejaVu Sans", sans-serif; color: #2b6ea8; }
.serif { font: 17px "Liberation Serif", serif; }
.serif em { font-weight: bold; }
.t-abc { font: bold 9px "Liberation Serif", serif; text-decoration: line-through; letter-spacing: -.5px; }
.t-x { font: bold 13px "DejaVu Sans", sans-serif; }
.t-x sup, .t-x sub { font: bold 8px "Liberation Sans", sans-serif; color: #3473d8; }
.t-x sup { align-self: flex-start; }
.t-x sub { align-self: flex-end; }
.omega { font: bold 16px "Liberation Sans", sans-serif; color: #3e7ade; }
.combo { width: 81px; height: 22px; margin-right: 2px; padding-left: 4px; flex: none; display: flex; align-items: center; justify-content: space-between; border: 1px solid #ccc; border-radius: 2px; background: #fff; color: #555; }
.combo.code { margin: 0 1px; }
.combo::after { content: ""; width: 11px; height: 20px; border-left: 1px solid #ccc; background: linear-gradient(#000, #000) 3px 9px / 5px 1px no-repeat, linear-gradient(#000, #000) 4px 10px / 3px 1px no-repeat, linear-gradient(#000, #000) 5px 11px / 1px 1px no-repeat; }
.content { height: 400px; display: flex; justify-content: space-between; }
.text { padding-left: 8px; white-space: nowrap; font: 14px/18px "Noto Sans", "Noto Sans CJK SC", sans-serif; text-spacing-trim: space-all; color: #444; }
.text p { margin: 0 0 18px; }
.text q { quotes: none; font-family: "Noto Sans CJK SC", sans-serif; line-height: 1; }
.text q::before, .text q::after { content: none; }
.dash { letter-spacing: .4px; }
.hy { letter-spacing: 1.37px; }
.digits { letter-spacing: .06px; }
.latin { letter-spacing: .12px; }
.tight { letter-spacing: -.04px; }
.scroll { width: 17px; display: flex; flex-direction: column; align-items: center; background: #f1f1f1; }
.scroll .thumb { width: 13px; height: 337px; margin-top: 36px; background: #c1c1c1; }
.up, .down { border: 4px solid transparent; }
.up { margin-top: 7px; border-top-width: 0; border-bottom-color: #505050; }
.down { border-bottom-width: 0; margin-top: 5px; border-top-color: #999; }
.status { flex: 1; display: flex; border-top: 1px solid #ccc; line-height: 38px; }
.path { width: 426px; padding-left: 11px; border-right: 1px solid #eee; }
.count { flex: 1; padding-right: 9px; text-align: right; color: #aaa; }
.savebar { margin-top: auto; height: 30px; display: flex; justify-content: center; background: linear-gradient(#f7f7f7, #bbb) 0 1px / 100% 5px no-repeat; }
.savebar button { width: 100px; height: 30px; padding: 0; border: 1px solid #3b94cc; background: linear-gradient(#55b3e6, #2f99d8 70%, #3aa0dc); color: #fff; font: 16px/28px "Noto Sans CJK SC", sans-serif; }
```
